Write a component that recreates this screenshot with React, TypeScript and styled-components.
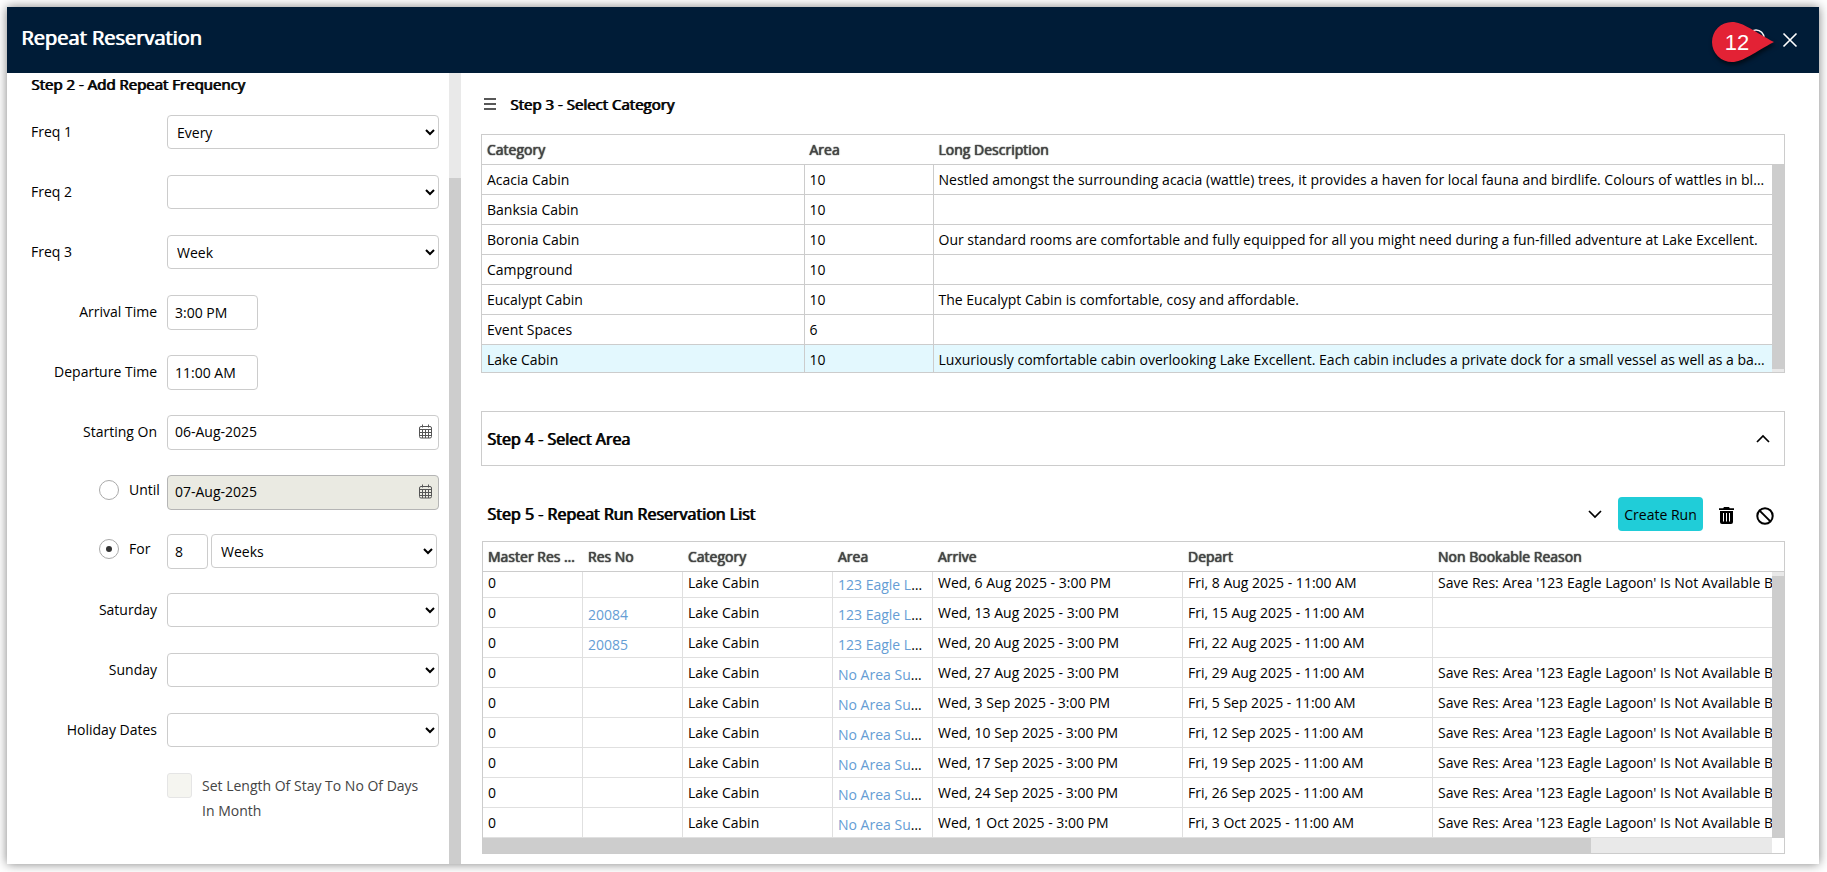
import React from "react";
import styled, { createGlobalStyle } from "styled-components";

const Global = createGlobalStyle`
  * { box-sizing: border-box; }
  html, body { margin: 0; background: #fff; }
  body, button, input, select { font-family: "Open Sans", sans-serif; font-size: 14px; color: #000; }
`;

const Page = styled.div`
  min-height: 100vh;
  padding: 7px 8px 8px 7px;
  display: flex;
  overflow: hidden;
`;
const Dialog = styled.section`
  flex: 1;
  min-width: 0;
  display: flex;
  flex-direction: column;
  background: #fff;
  box-shadow: 0 0 10px rgba(0, 0, 0, 0.5);
`;
const TitleBar = styled.header`
  height: 66px;
  display: flex;
  align-items: center;
  justify-content: space-between;
  padding: 0 20px 4px 14px;
  background: #001c37;
  color: #fff;
`;
const Title = styled.h1`
  margin: 0;
  font-size: 20px;
  line-height: 28px;
  font-weight: 400;
  text-shadow: 1px 0 0 currentColor;
`;
const TitleActions = styled.div`
  display: flex;
  align-items: center;
  gap: 5px;
  padding-top: 4px;
`;
const Marker = styled.svg`
  display: block;
  width: 66px;
  height: 48px;
  overflow: visible;
  font-family: "Liberation Sans", Arial, sans-serif;
`;
const Drop = styled.path`
  fill: #e32235;
  filter: drop-shadow(1px 3px 2px rgba(0, 0, 0, 0.6));
`;
const IconButton = styled.button`
  display: flex;
  align-items: center;
  justify-content: center;
  padding: 0;
  border: 0;
  background: none;
  color: inherit;
  svg { display: block; }
`;
const Body = styled.div`
  flex: 1;
  display: flex;
  min-height: 0;
`;

const Sidebar = styled.aside`
  width: 454px;
  flex: none;
  display: flex;
`;
const Form = styled.form`
  flex: 1;
  padding: 0 10px 0 24px;
`;
const Heading = styled.h2<{ $large?: boolean }>`
  margin: 0;
  font-size: ${(p) => (p.$large ? 16 : 15)}px;
  line-height: 22px;
  font-weight: 400;
  text-shadow: 1px 0 0 currentColor;
`;
const FormHeading = styled(Heading)`
  height: 29px;
`;
const Row = styled.div<{ $tight?: boolean }>`
  height: ${(p) => (p.$tight ? 58 : 60)}px;
  display: grid;
  grid-template-columns: 136px 1fr;
  align-items: center;
`;
const Label = styled.label<{ $end?: boolean }>`
  text-align: ${(p) => (p.$end ? "right" : "left")};
  padding: 0 10px 1px 0;
`;
const RadioLabel = styled.label`
  display: flex;
  align-items: center;
  gap: 10px;
  padding: 0 0 5px 68px;
`;
const Radio = styled.input.attrs({ type: "radio" })`
  appearance: none;
  width: 20px;
  height: 20px;
  margin: 0;
  border: 1px solid #aaa;
  border-radius: 50%;
  display: grid;
  place-items: center;
  &:checked::after {
    content: "";
    width: 6px;
    height: 6px;
    border-radius: 50%;
    background: #333;
  }
`;
const Select = styled.select`
  width: 100%;
  height: 34px;
  padding: 0 0 0 5px;
  border: 1px solid #ccc;
  border-radius: 4px;
  background-color: #fff;
`;
const TextBox = styled.input<{ $width: number }>`
  width: ${(p) => p.$width}px;
  height: 35px;
  padding: 0 7px;
  border: 1px solid #ccc;
  border-radius: 4px;
`;
const DateBox = styled.div<{ $off?: boolean }>`
  height: 35px;
  display: flex;
  align-items: center;
  padding: 0 5px 1px 0;
  border: 1px solid ${(p) => (p.$off ? "#b5b5b5" : "#ccc")};
  border-radius: 4px;
  background: ${(p) => (p.$off ? "#eaeae2" : "#fff")};
  input {
    flex: 1;
    min-width: 0;
    border: 0;
    padding: 0 7px;
    background: none;
    color: #000;
  }
`;
const Span = styled.div`
  display: flex;
  align-items: center;
  gap: 3px;
  padding-right: 2px;
`;
const CheckLabel = styled.label`
  display: flex;
  gap: 10px;
  margin: 13px 15px 0 136px;
  line-height: 25px;
  color: #444;
`;
const Check = styled.input.attrs({ type: "checkbox" })`
  appearance: none;
  flex: none;
  width: 25px;
  height: 25px;
  margin: 0;
  border: 1px solid #e5e5e5;
  border-radius: 3px;
  background: #f5f5f0;
`;

const Rail = styled.div<{ $lead: number; $tail: number; $across?: boolean }>`
  flex: ${(p) => (p.$across ? "none" : "1")};
  background: #cdcdcd;
  border: 0 solid #e9e9e9;
  border-width: ${(p) => (p.$across ? `0 ${p.$tail}px 0 0` : `${p.$lead}px 0 ${p.$tail}px`)};
`;
const RailColumn = styled.div`
  width: 12px;
  flex: none;
  display: flex;
  flex-direction: column;
`;
const RailHead = styled.div`
  height: 30px;
  border-bottom: 1px solid #ccc;
`;
const HorizontalTrack = styled.div`
  height: 15px;
  display: grid;
`;
const Corner = styled.div`
  height: 15px;
`;

const Main = styled.main`
  flex: 1;
  min-width: 0;
  display: flex;
  flex-direction: column;
  padding: 0 34px 10px 20px;
`;
const CategoryHead = styled.div`
  height: 61px;
  display: flex;
  align-items: center;
  gap: 14px;
  padding-left: 3px;
`;
const Frame = styled.div`
  border: 1px solid #ccc;
`;
const ListFrame = styled(Frame)`
  margin-left: 1px;
`;
const Split = styled.div`
  display: flex;
`;
const Clip = styled.div`
  flex: 1;
  min-width: 0;
  overflow: hidden;
`;
const Grid = styled.table<{ $width: string }>`
  width: ${(p) => p.$width};
  table-layout: fixed;
  border-collapse: separate;
  border-spacing: 0;
  line-height: 22px;
  th, td {
    height: 30px;
    overflow: hidden;
    text-overflow: ellipsis;
    white-space: nowrap;
    text-align: left;
  }
  th {
    padding: 0 5px;
    border-bottom: 1px solid #ccc;
    color: #444;
    font-weight: 400;
    text-shadow: 0 0 1px currentColor, 0 0 1px currentColor;
  }
`;
const CategoryRow = styled.tr<{ $selected?: boolean }>`
  background: ${(p) => (p.$selected ? "#e3f8fe" : "#fff")};
  td {
    height: ${(p) => (p.$selected ? 27 : 30)}px;
    padding: ${(p) => (p.$selected ? "4px 5px 1px" : "4px 5px 3px")};
    border-right: 1px solid #ccc;
    border-bottom: ${(p) => (p.$selected ? 0 : 1)}px solid #ccc;
  }
  td:last-child { border-right: 0; }
`;
const RunRow = styled.tr`
  td {
    padding: 0 5px 3px;
    vertical-align: bottom;
    border-right: 1px solid #e0e0e0;
    border-bottom: 1px solid #e0e0e0;
  }
  &:first-child td { height: 26px; }
`;
const LinkCell = styled.td`
  && { padding: 0 8px 1px 5px; }
  a { color: #659dd4; text-decoration: none; }
`;
const AreaPanel = styled(Frame)`
  height: 55px;
  margin-top: 38px;
  display: flex;
  align-items: center;
  justify-content: space-between;
  padding: 0 14px 0 5px;
`;
const RunHead = styled.div`
  display: flex;
  align-items: center;
  justify-content: space-between;
  padding: 31px 4px 10px 6px;
`;
const Actions = styled.div`
  display: flex;
  align-items: center;
  gap: 7px;
`;
const ActionButton = styled(IconButton)<{ $filled?: boolean }>`
  width: 32px;
  height: 34px;
  padding-top: ${(p) => (p.$filled ? 3 : 0)}px;
`;
const Primary = styled.button`
  width: 85px;
  height: 34px;
  padding: 0;
  border: 0;
  border-radius: 4px;
  background: #20cdd8;
`;

const Chevron = ({ up }: { up?: boolean }) => (
  <svg width="14" height="14" viewBox="0 0 14 14" fill="none" stroke="#000" strokeWidth="1.7">
    <path d={up ? "M1 10 7 4 13 10" : "M1 4 7 10 13 4"} />
  </svg>
);
const CalendarIcon = () => (
  <svg width="14" height="15" viewBox="0 0 14 15" fill="none" stroke="#555" strokeWidth="1">
    <rect x="0.5" y="2.5" width="12" height="11.5" rx="1.5" />
    <path d="M.5 5.5h12M.5 8.5h12M.5 11.5h12M3.500 5.5V14M6.5 5.5V14M9.500 5.5V14M3.5 .5v3M9.5 .5v3" />
  </svg>
);
const TrashIcon = () => (
  <svg width="15" height="17" viewBox="0 0 15 17">
    <path d="M5 0h5l.8 1.2H15V3H0V1.2h4.2z" />
    <path d="M1 4h13v11q0 2-2 2H3q-2 0-2-2z" />
    <path d="M4.5 6v8.500M7.5 6v8.500M10.5 6v8.500" stroke="#fff" />
  </svg>
);
const BanIcon = () => (
  <svg width="18" height="18" viewBox="0 0 18 18" fill="none" stroke="#000" strokeWidth="2">
    <circle cx="9" cy="9" r="7.7" />
    <path d="M3.6 3.6 14.4 14.4" />
  </svg>
);

const categories: [string, string, string][] = [
  ["Acacia Cabin", "10", "Nestled amongst the surrounding acacia (wattle) trees, it provides a haven for local fauna and birdlife. Colours of wattles in bloom"],
  ["Banksia Cabin", "10", ""],
  ["Boronia Cabin", "10", "Our standard rooms are comfortable and fully equipped for all you might need during a fun-filled adventure at Lake Excellent."],
  ["Campground", "10", ""],
  ["Eucalypt Cabin", "10", "The Eucalypt Cabin is comfortable, cosy and affordable."],
  ["Event Spaces", "6", ""],
  ["Lake Cabin", "10", "Luxuriously comfortable cabin overlooking Lake Excellent. Each cabin includes a private dock for a small vessel as well as a balcony"],
];

const eagle = "123 Eagle Lagoon";
const none = "No Area Suitable";
const reason = "Save Res: Area '123 Eagle Lagoon' Is Not Available B";
const runs = [
  { no: "", area: eagle, arrive: "Wed, 6 Aug 2025", depart: "Fri, 8 Aug 2025", reason },
  { no: "20084", area: eagle, arrive: "Wed, 13 Aug 2025", depart: "Fri, 15 Aug 2025", reason: "" },
  { no: "20085", area: eagle, arrive: "Wed, 20 Aug 2025", depart: "Fri, 22 Aug 2025", reason: "" },
  { no: "", area: none, arrive: "Wed, 27 Aug 2025", depart: "Fri, 29 Aug 2025", reason },
  { no: "", area: none, arrive: "Wed, 3 Sep 2025", depart: "Fri, 5 Sep 2025", reason },
  { no: "", area: none, arrive: "Wed, 10 Sep 2025", depart: "Fri, 12 Sep 2025", reason },
  { no: "", area: none, arrive: "Wed, 17 Sep 2025", depart: "Fri, 19 Sep 2025", reason },
  { no: "", area: none, arrive: "Wed, 24 Sep 2025", depart: "Fri, 26 Sep 2025", reason },
  { no: "", area: none, arrive: "Wed, 1 Oct 2025", depart: "Fri, 3 Oct 2025", reason },
];

const SelectRow = ({ id, label, value, end }: { id: string; label: string; value?: string; end?: boolean }) => (
  <Row>
    <Label htmlFor={id} $end={end}>{label}</Label>
    <Select id={id}><option>{value}</option></Select>
  </Row>
);

export default function App() {
  return (
    <>
      <Global />
      <Page>
        <Dialog aria-labelledby="title">
          <TitleBar>
            <Title id="title">Repeat Reservation</Title>
            <TitleActions>
              <Marker viewBox="0 0 66 48" aria-label="12">
                <circle cx="46" cy="22" r="8" fill="none" stroke="#fff" strokeWidth="1.5" />
                <Drop d="M22 6C33 6 45 16 64 26C45 36 33 46 22 46A20 20 0 0 1 22 6Z" />
                <text x="27" y="34" fontSize="22" fill="#fff" textAnchor="middle">12</text>
              </Marker>
              <IconButton aria-label="Close">
                <svg width="18" height="18" viewBox="0 0 18 18" stroke="#fff" strokeWidth="1.6"><path d="M2.500 2.500 15.500 15.500M15.500 2.500 2.500 15.500" /></svg>
              </IconButton>
            </TitleActions>
          </TitleBar>
          <Body>
            <Sidebar>
              <Form>
                <FormHeading>Step 2 - Add Repeat Frequency</FormHeading>
                <SelectRow id="f1" label="Freq 1" value="Every" />
                <SelectRow id="f2" label="Freq 2" />
                <SelectRow id="f3" label="Freq 3" value="Week" />
                <Row>
                  <Label htmlFor="arr" $end>Arrival Time</Label>
                  <TextBox id="arr" $width={91} defaultValue="3:00 PM" />
                </Row>
                <Row>
                  <Label htmlFor="dep" $end>Departure Time</Label>
                  <TextBox id="dep" $width={91} defaultValue="11:00 AM" />
                </Row>
                <Row>
                  <Label htmlFor="start" $end>Starting On</Label>
                  <DateBox>
                    <input id="start" defaultValue="06-Aug-2025" />
                    <IconButton type="button" aria-label="Pick start date"><CalendarIcon /></IconButton>
                  </DateBox>
                </Row>
                <Row>
                  <RadioLabel><Radio name="end" />Until</RadioLabel>
                  <DateBox $off>
                    <input aria-label="Until date" defaultValue="07-Aug-2025" disabled />
                    <IconButton type="button" aria-label="Pick end date" disabled><CalendarIcon /></IconButton>
                  </DateBox>
                </Row>
                <Row $tight>
                  <RadioLabel><Radio name="end" defaultChecked />For</RadioLabel>
                  <Span>
                    <TextBox aria-label="Run length" $width={41} defaultValue="8" />
                    <Select aria-label="Run length unit"><option>Weeks</option></Select>
                  </Span>
                </Row>
                <SelectRow id="sat" label="Saturday" end />
                <SelectRow id="sun" label="Sunday" end />
                <SelectRow id="hol" label="Holiday Dates" end />
                <CheckLabel><Check disabled />Set Length Of Stay To No Of Days In Month</CheckLabel>
              </Form>
              <RailColumn><Rail $lead={105} $tail={0} /></RailColumn>
            </Sidebar>
            <Main>
              <CategoryHead>
                <IconButton aria-label="Menu">
                  <svg width="12" height="12" viewBox="0 0 12 12" stroke="#222" strokeWidth="1.5"><path d="M0 1h12M0 6h12M0 11h12" /></svg>
                </IconButton>
                <Heading>Step 3 - Select Category</Heading>
              </CategoryHead>
              <Frame>
                <Split>
                  <Clip>
                    <Grid $width="100%">
                      <colgroup><col width="25%" /><col width="10%" /><col width="65%" /></colgroup>
                      <thead><tr><th>Category</th><th>Area</th><th>Long Description</th></tr></thead>
                      <tbody>
                        {categories.map(([name, area, text]) => (
                          <CategoryRow key={name} $selected={name === "Lake Cabin"}>
                            <td>{name}</td><td>{area}</td><td>{text}</td>
                          </CategoryRow>
                        ))}
                      </tbody>
                    </Grid>
                  </Clip>
                  <RailColumn><RailHead /><Rail $lead={0} $tail={3} /></RailColumn>
                </Split>
              </Frame>
              <AreaPanel>
                <Heading $large>Step 4 - Select Area</Heading>
                <IconButton aria-label="Collapse area"><Chevron up /></IconButton>
              </AreaPanel>
              <RunHead>
                <Heading $large>Step 5 - Repeat Run Reservation List</Heading>
                <Actions>
                  <ActionButton aria-label="Expand list"><Chevron /></ActionButton>
                  <Primary>Create Run</Primary>
                  <ActionButton $filled aria-label="Delete"><TrashIcon /></ActionButton>
                  <ActionButton $filled aria-label="Cancel run"><BanIcon /></ActionButton>
                </Actions>
              </RunHead>
              <ListFrame>
                <Split>
                  <Clip>
                    <Grid $width="1500px">
                      <colgroup>
                        <col width="100" /><col width="100" /><col width="150" /><col width="100" /><col width="250" /><col width="250" /><col />
                      </colgroup>
                      <thead>
                        <tr><th>Master Res No</th><th>Res No</th><th>Category</th><th>Area</th><th>Arrive</th><th>Depart</th><th>Non Bookable Reason</th></tr>
                      </thead>
                      <tbody>
                        {runs.map((r) => (
                          <RunRow key={r.arrive}>
                            <td>0</td>
                            <LinkCell>{r.no && <a href="#reservation">{r.no}</a>}</LinkCell>
                            <td>Lake Cabin</td>
                            <LinkCell><a href="#area">{r.area}</a></LinkCell>
                            <td>{r.arrive} - 3:00 PM</td>
                            <td>{r.depart} - 11:00 AM</td>
                            <td>{r.reason}</td>
                          </RunRow>
                        ))}
                      </tbody>
                    </Grid>
                    <HorizontalTrack><Rail $across $lead={0} $tail={181} /></HorizontalTrack>
                  </Clip>
                  <RailColumn><RailHead /><Rail $lead={4} $tail={0} /><Corner /></RailColumn>
                </Split>
              </ListFrame>
            </Main>
          </Body>
        </Dialog>
      </Page>
    </>
  );
}
